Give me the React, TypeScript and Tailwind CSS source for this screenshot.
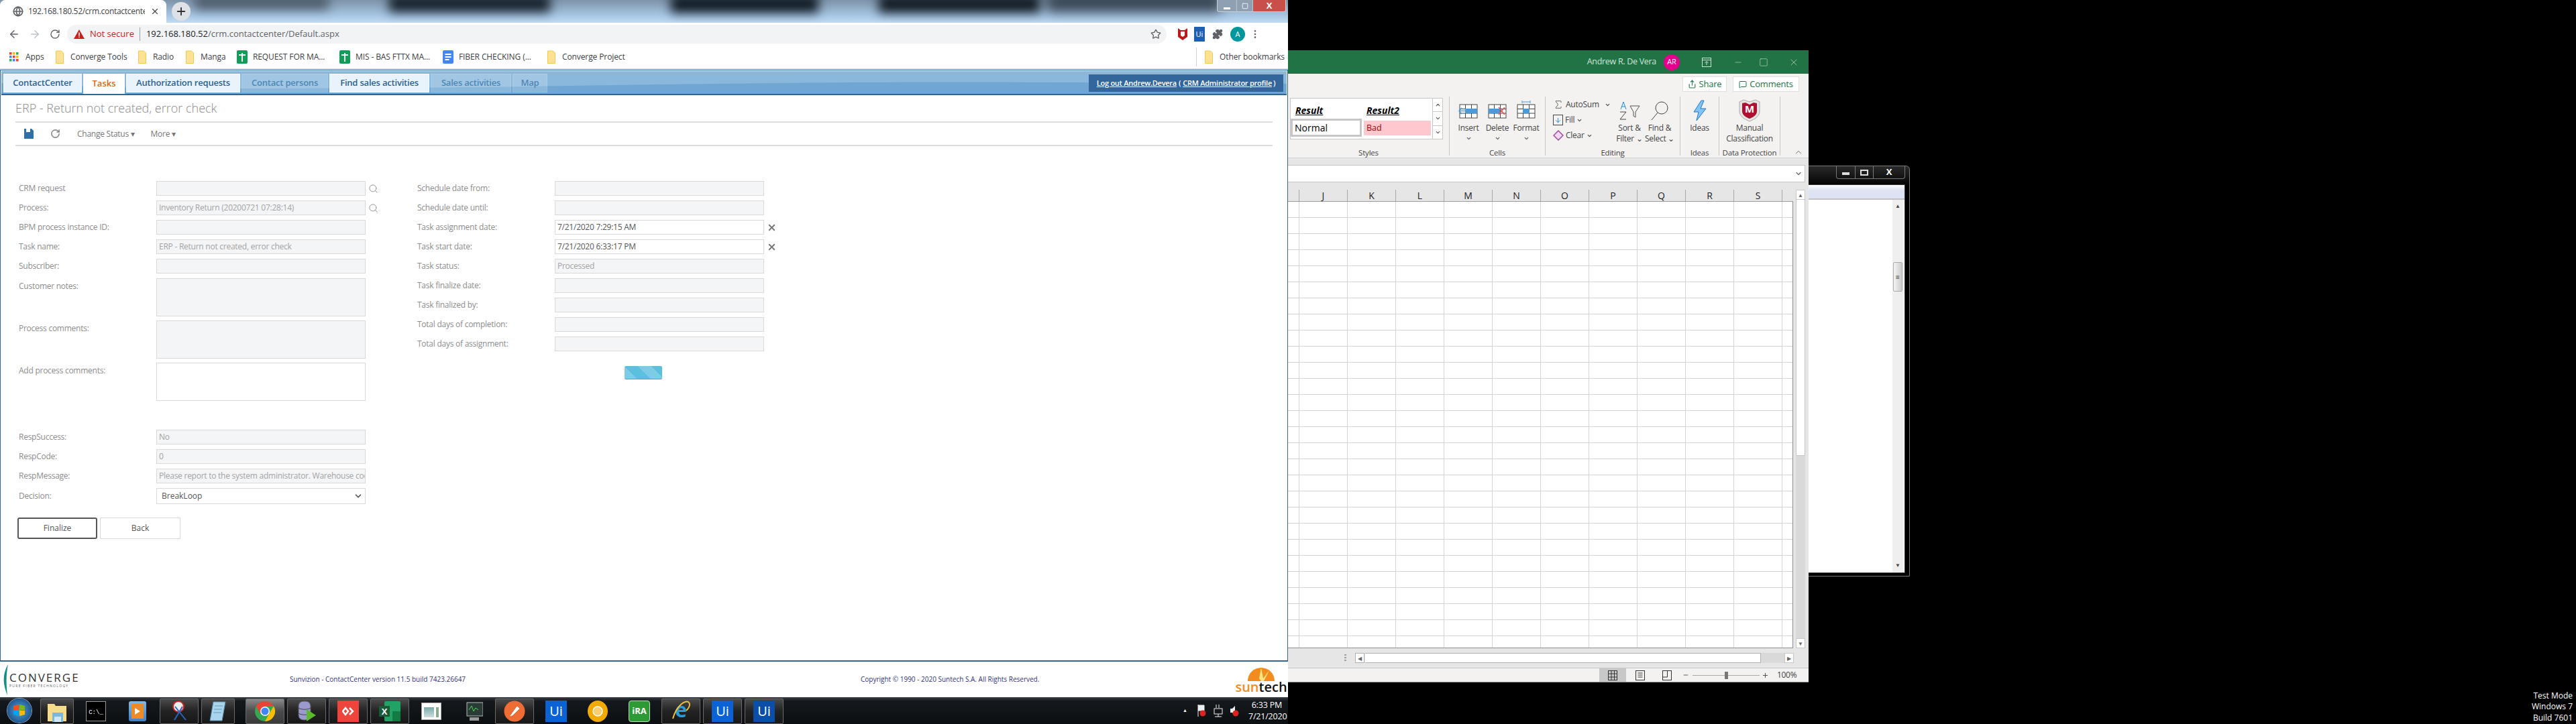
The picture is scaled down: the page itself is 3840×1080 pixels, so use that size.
import React from "react";
import { ArrowLeft, ArrowRight, RotateCw, Star, Search, X, ChevronDown, ChevronUp, Globe, Plus, MoreVertical, Puzzle, Share, MessageSquare, Minus, Square, Sigma, ArrowDown } from "lucide-react";

const Folder = () => (
  <svg width="12" height="20" viewBox="0 0 12 20" className="shrink-0"><path d="M0.5 1h8l3 3v15.500h-11z" fill="#fde293" stroke="#f2c94c" /></svg>
);
const GreenDoc = () => (
  <svg width="16" height="20" viewBox="0 0 16 20" className="shrink-0"><rect width="16" height="20" rx="2" fill="#0f9d58" /><path d="M3 7h10M8 4v13" stroke="#fff" strokeWidth="1.800" /></svg>
);
const BlueDoc = () => (
  <svg width="16" height="20" viewBox="0 0 16 20" className="shrink-0"><rect width="16" height="20" rx="2" fill="#4285f4" /><path d="M3.500 6h9M3.500 10h9M3.500 14h6" stroke="#fff" strokeWidth="2" /></svg>
);
const AppsGrid = () => (
  <svg width="14" height="14" viewBox="0 0 14 14" className="shrink-0">
    {[["#ea4335","#fbbc05","#34a853"],["#4285f4","#ea4335","#fbbc05"],["#34a853","#4285f4","#ea4335"]].map((r, y) => r.map((c, x) => <rect key={x + "-" + y} x={x * 5} y={y * 5} width="3.500" height="3.500" fill={c} />))}
  </svg>
);

function ChromeBars() {
  return (
    <>
      <div className="relative h-[34px] overflow-hidden bg-[linear-gradient(to_bottom,#7d93a8_0%,#a9c8e6_70%,#c3dbf2_100%)]">
        <div className="absolute left-[290px] top-[-8px] h-[22px] w-[200px] bg-[#4d5c6b] blur-[8px]" />
        <div className="absolute left-[580px] top-[-8px] h-[26px] w-[240px] bg-[#15202b] blur-[8px]" />
        <div className="absolute left-[1000px] top-[-8px] h-[27px] w-[220px] bg-[#101a24] blur-[8px]" />
        <div className="absolute left-[1310px] top-[-8px] h-[27px] w-[240px] bg-[#111a23] blur-[8px]" />
        <div className="absolute left-[1560px] top-[-8px] h-[24px] w-[260px] bg-[#2b3744] blur-[10px]" />
        <div className="relative flex items-center">
          <div className="flex h-[34px] w-[248px] items-center rounded-t-lg bg-white pl-[19px] pr-[10px] text-[12px] tracking-[-0.3px] text-[#3c4043]">
            <Globe size={16} className="mr-[7px] shrink-0 text-[#5f6368]" strokeWidth={2.500} />
            <span className="w-[174px] overflow-hidden whitespace-nowrap">192.168.180.52/crm.contactcenter</span>
            <X size={14} className="ml-auto shrink-0 text-[#444]" />
          </div>
          <div className="ml-[8px] flex h-[28px] w-[28px] items-center justify-center rounded-full bg-[#dee1e6] text-[#333]"><Plus size={18} strokeWidth={2.500} /></div>
        </div>
        <div className="absolute right-[3px] top-0 flex h-[18px] w-[103px] overflow-hidden rounded-b border border-t-0 border-[#e5e5e5]/70 bg-[#8fa0b2]">
          <div className="flex w-[28px] items-end justify-center pb-[3px]"><div className="h-[3px] w-[10px] bg-white" /></div>
          <div className="flex w-[25px] items-center justify-center border-x border-white/40"><Square size={10} className="text-white" strokeWidth={2} /></div>
          <div className="flex flex-1 items-center justify-center bg-[#c9504a] text-[13px] font-bold text-white">X</div>
        </div>
      </div>
      <div className="flex h-[34px] items-center bg-white">
        <ArrowLeft size={18} className="ml-[12px] text-[#5f6368]" />
        <ArrowRight size={18} className="ml-[13px] text-[#bdc1c6]" />
        <RotateCw size={16} className="ml-[13px] text-[#5f6368]" />
        <div className="ml-[10px] flex h-[28px] w-[1639px] items-center rounded-full bg-[#f1f3f4] pl-[10px] pr-[8px] text-[13px]">
          <svg width="16" height="14" viewBox="0 0 16 14" className="shrink-0"><path d="M8 0l8 14H0z" fill="#c5221f" /><rect x="7.200" y="4.500" width="1.600" height="5" fill="#fff" /><rect x="7.200" y="10.500" width="1.600" height="1.600" fill="#fff" /></svg>
          <span className="ml-[8px] text-[#c5221f]">Not secure</span>
          <span className="ml-[8px] mr-[9px] h-[20px] w-px bg-[#9aa0a6]" />
          <span className="text-[#202124]">192.168.180.52</span><span className="text-[#5f6368]">/crm.contactcenter/Default.aspx</span>
          <Star size={16} className="ml-auto text-[#5f6368]" />
        </div>
        <svg width="14" height="20" viewBox="0 0 14 20" className="ml-[17px] shrink-0"><path d="M0 1l4 3h6l4-3v13l-7 5-7-5z" fill="#c01818" /><path d="M4 6h6v6l-3 2-3-2z" fill="#fff" /></svg>
        <div className="ml-[10px] flex h-[22px] w-[16px] items-center justify-center bg-[#1f5fb0] text-[11px] text-white">Ui</div>
        <Puzzle size={16} className="ml-[11px] fill-[#5f6368] text-[#5f6368]" />
        <div className="ml-[11px] flex h-[22px] w-[22px] items-center justify-center rounded-full bg-[#00979d] text-[11px] text-white">A</div>
        <MoreVertical size={16} className="ml-[7px] text-[#5f6368]" />
      </div>
      <div className="flex h-[34px] items-center bg-white text-[12px] tracking-[-0.1px] text-[#3c4043]">
        <div className="ml-[14px] flex w-[69px] items-center gap-[10px]"><AppsGrid /><span>Apps</span></div>
        <div className="flex w-[123px] items-center gap-[10px]"><Folder /><span>Converge Tools</span></div>
        <div className="flex w-[71px] items-center gap-[10px]"><Folder /><span>Radio</span></div>
        <div className="flex w-[76px] items-center gap-[10px]"><Folder /><span>Manga</span></div>
        <div className="flex w-[153px] items-center gap-[8px]"><GreenDoc /><span>REQUEST FOR MA...</span></div>
        <div className="flex w-[154px] items-center gap-[8px]"><GreenDoc /><span>MIS - BAS FTTX MA...</span></div>
        <div className="flex w-[156px] items-center gap-[8px]"><BlueDoc /><span>FIBER CHECKING (...</span></div>
        <div className="flex items-center gap-[10px]"><Folder /><span>Converge Project</span></div>
        <div className="ml-auto mr-[5px] flex items-center gap-[10px]"><span className="mr-[2px] h-[28px] w-px bg-[#d0d0d0]" /><Folder /><span>Other bookmarks</span></div>
      </div>
    </>
  );
}

const tabClass = "flex h-[28px] items-center justify-center border border-white/70 bg-[#e9f3fb] text-[13px] font-semibold tracking-[-0.2px] text-[#2c6291]";
const tabOff = "flex h-[28px] items-center justify-center border border-white/10 bg-white/20 text-[13px] font-semibold tracking-[-0.2px] text-[#4d86b5]";

function AppHeader() {
  return (
    <div className="relative flex h-[36px] items-end justify-between overflow-hidden border-b-2 border-[#2f6599] bg-[#8ab8dc]">
      <svg className="absolute inset-0 h-full w-full" viewBox="0 0 1914 36" preserveAspectRatio="none"><path d="M0 19C150 28 400 30 800 24S1300 15 1914 20V36H0z" fill="#6fa6d2" /></svg>
      <div className="relative ml-[3px] flex gap-[2px]">
        <div className={"w-[117px] " + tabClass}>ContactCenter</div>
        <div className="flex h-[30px] w-[62px] items-center justify-center bg-white text-[13px] font-semibold text-[#d9660f]">Tasks</div>
        <div className={"w-[170px] " + tabClass}>Authorization requests</div>
        <div className={"w-[129px] " + tabOff}>Contact persons</div>
        <div className={"w-[149px] " + tabClass}>Find sales activities</div>
        <div className={"w-[120px] " + tabOff}>Sales activities</div>
        <div className={"w-[52px] " + tabOff}>Map</div>
      </div>
      <div className="relative mb-[3px] mr-[5px] flex h-[26px] w-[290px] items-center justify-center bg-[#33669a] text-[11px] font-semibold tracking-[-0.25px] whitespace-nowrap text-white">
        <span className="underline">Log out Andrew.Devera</span><span className="mx-[3px]">(</span><span className="underline">CRM Administrator profile</span><span className="ml-[2px]">)</span>
      </div>
    </div>
  );
}

const inputBase = "flex h-[22px] w-[312px] items-center overflow-hidden border border-[#d9d9d9] px-[3px] text-[12px] tracking-[-0.25px] whitespace-nowrap";
const labelClass = "w-[205px] text-[12px] tracking-[-0.25px] text-[#8c8c8c]";

function Field({ label, value, white, after }: { label: string; value?: string; white?: boolean; after?: React.ReactNode }) {
  return (
    <div className="mb-[7px] flex h-[22px] items-center">
      <div className={labelClass}>{label}</div>
      <div className={inputBase + (white ? " bg-white text-[#555]" : " bg-[#f4f5f7] text-[#a3a3a3]")}>{value}</div>
      {after}
    </div>
  );
}
function Area({ label, white }: { label: string; white?: boolean }) {
  return (
    <div className="mb-[6px] flex h-[57px] items-start">
      <div className={labelClass + " pt-[3px]"}>{label}</div>
      <div className={"h-[57px] w-[312px] border border-[#d9d9d9] " + (white ? "bg-white" : "bg-[#f4f5f7]")} />
    </div>
  );
}
const SearchIcon = () => <Search size={15} className="ml-[4px] text-[#8d8d8d]" strokeWidth={1.500} />;
const ClearIcon = () => <X size={15} className="ml-[4px] text-[#777]" strokeWidth={3} />;

function Form() {
  return (
    <div className="flex pl-[27px] pt-[52px]">
      <div className="w-[594px]">
        <Field label="CRM request" after={<SearchIcon />} />
        <Field label="Process:" value="Inventory Return (20200721 07:28:14)" after={<SearchIcon />} />
        <Field label="BPM process instance ID:" />
        <Field label="Task name:" value="ERP - Return not created, error check" />
        <Field label="Subscriber:" />
        <Area label="Customer notes:" />
        <Area label="Process comments:" />
        <Area label="Add process comments:" white />
        <div className="h-[37px]" />
        <Field label="RespSuccess:" value="No" />
        <Field label="RespCode:" value="0" />
        <Field label="RespMessage:" value="Please report to the system administrator. Warehouse code" />
        <div className="flex h-[24px] items-center">
          <div className={labelClass}>Decision:</div>
          <div className="flex h-[24px] w-[312px] items-center justify-between border border-[#d9d9d9] bg-white pl-[7px] pr-[3px] text-[12px] text-[#555]">BreakLoop<ChevronDown size={14} strokeWidth={3} className="text-[#555]" /></div>
        </div>
        <div className="ml-[-2px] mt-[20px] flex gap-[4px] text-[12px] text-[#555]">
          <div className="flex h-[32px] w-[119px] items-center justify-center rounded-[3px] border-2 border-[#555]">Finalize</div>
          <div className="flex h-[32px] w-[120px] items-center justify-center border border-[#d9d9d9]">Back</div>
        </div>
      </div>
      <div>
        <Field label="Schedule date from:" />
        <Field label="Schedule date until:" />
        <Field label="Task assignment date:" value="7/21/2020 7:29:15 AM" white after={<ClearIcon />} />
        <Field label="Task start date:" value="7/21/2020 6:33:17 PM" white after={<ClearIcon />} />
        <Field label="Task status:" value="Processed" />
        <Field label="Task finalize date:" />
        <Field label="Task finalized by:" />
        <Field label="Total days of completion:" />
        <Field label="Total days of assignment:" />
        <div className="ml-[309px] mt-[22px] h-[20px] w-[56px] rounded-[2px] border-b border-[#46a8c8] bg-[linear-gradient(45deg,#5bc0de_25%,#7bcce4_25%,#7bcce4_50%,#5bc0de_50%,#5bc0de_75%,#7bcce4_75%)] bg-[size:40px_40px]" />
      </div>
    </div>
  );
}

function Footer() {
  return (
    <div className="relative flex h-[53px] items-center bg-white text-[10px] text-[#33337a]">
      <div className="flex w-[432px] items-center">
        <svg width="14" height="48" viewBox="0 0 14 48" className="ml-[2px] shrink-0"><path d="M10 1C4 12 0 26 9 47 7 30 7 16 10 1z" fill="#168e84" /></svg>
        <div className="ml-[-2px] leading-none">
          <div className="text-[17px] tracking-[2px] text-[#333]">CONVERGE</div>
          <div className="mt-[2px] text-[5px] tracking-[1.300px] text-[#555]">PURE FIBER TECHNOLOGY</div>
        </div>
      </div>
      <div className="w-[851px]">Sunvizion - ContactCenter version 11.5 build 7423.26647</div>
      <div>Copyright © 1990 - 2020 Suntech S.A. All Rights Reserved.</div>
      <div className="absolute right-[4px] top-[7px] flex w-[72px] flex-col items-center">
        <svg width="44" height="22" viewBox="0 0 44 22"><path d="M2 22a20 20 0 0 1 40 0z" fill="#f28c1e" /><path d="M22 22L10 6l9 12L22 2l3 16 9-12-8 16z" fill="#ffe680" /></svg>
        <div className="text-[20px] leading-[17px] font-semibold"><span className="text-[#f28c1e]">sun</span><span className="text-[#111]">tech</span></div>
      </div>
    </div>
  );
}

function ChromeWindow() {
  return (
    <div className="absolute left-0 top-0 flex h-[1040px] w-[1920px] flex-col bg-white">
      <ChromeBars />
      <div className="h-[2px] bg-[#d4d8dc]" />
      <div className="flex h-[883px] flex-col border-2 border-t-[1px] border-[#2f6599] border-r-[1px] border-l-[1px]">
        <div className="mx-[1px] mt-[1px]"><AppHeader /></div>
        <div className="mx-[22px] mt-0 flex h-[41px] items-end"><div className="flex h-[41px] w-full items-center border-b-2 border-[#dcdcdc] text-[18px] font-light text-[#8a8a8a]">ERP - Return not created, error check</div></div>
        <div className="mx-[22px] flex h-[35px] items-center border-b-2 border-[#dcdcdc] text-[12px] tracking-[-0.25px] text-[#777]">
          <svg width="14" height="15" viewBox="0 0 14 15" className="ml-[13px]"><path d="M0 0h3v5h6V0h2l3 3v12H0z" fill="#2f6fa8" /></svg>
          <RotateCw size={15} className="ml-[25px] text-[#888]" strokeWidth={2.500} />
          <span className="ml-[25px]">Change Status ▾</span>
          <span className="ml-[24px]">More ▾</span>
        </div>
        <Form />
      </div>
      <Footer />
    </div>
  );
}

const Ribbon = ({ children, w, label }: { children?: React.ReactNode; w: string; label: string }) => (
  <div className={"relative flex h-[88px] flex-col border-r border-[#c8c6c4] " + w}>
    <div className="flex min-h-0 flex-1">{children}</div>
    <div className="mb-[-4px] text-center text-[11.500px] leading-[16px] tracking-[-0.2px] text-[#444]">{label}</div>
  </div>
);
const TableIcon = ({ kind }: { kind: string }) => (
  <svg width="30" height="24" viewBox="0 0 30 24" className="shrink-0 overflow-visible">
    <rect x="2" y="3" width="26" height="20" fill="#fff" stroke="#444" />
    <path d="M10.500 3v20M19.500 3v20M2 9.500h26M2 16h26" stroke="#444" />
    {kind === "i" && <><rect x="10" y="9" width="18" height="7" fill="#4a9bdc" /><path d="M13 12.500H1M5 8l-4 4.500L5 17" stroke="#4a9bdc" fill="none" strokeWidth="1.500" /></>}
    {kind === "d" && <><rect x="2" y="9" width="17" height="7" fill="#4a9bdc" /><path d="M17 7l9 11M26 7l-9 11" stroke="#e8584f" strokeWidth="1.500" /></>}
    {kind === "f" && <><rect x="10" y="9" width="10" height="7" fill="#4a9bdc" /><path d="M9 -1h12M9-3v4M21-3v4" stroke="#4a9bdc" /></>}
  </svg>
);
const RibbonBtn = ({ center, children, icon, chevron = true }: { center?: string; children: React.ReactNode; icon: React.ReactNode; chevron?: boolean }) => (
  <div className={"flex flex-col items-center pt-[6px] text-[12px] leading-[16px] tracking-[-0.25px] text-[#444] " + (center ?? "")}>
    <div className="flex h-[30px] items-center">{icon}</div>
    <div className="mt-[3px] text-center whitespace-nowrap">{children}</div>
    {chevron && <ChevronDown size={9} strokeWidth={3} className="mt-[3px] text-[#555]" />}
  </div>
);

function Excel() {
  const cols = ["J","K","L","M","N","O","P","Q","R","S"];
  return (
    <div className="absolute left-[1920px] top-[75px] flex h-[943px] w-[776px] flex-col border-b border-[#8e8e8e] bg-[#e6e6e6]">
      <div className="flex h-[35px] items-center justify-end bg-[#217346] text-[#cfe3d7]">
        <span className="text-[12.500px] tracking-[-0.3px]">Andrew R. De Vera</span>
        <span className="ml-[11px] flex h-[24px] w-[24px] items-center justify-center rounded-full bg-[#e3008c] text-[11px] text-white">AR</span>
        <svg width="14" height="14" viewBox="0 0 14 14" className="ml-[33px]" fill="none" stroke="currentColor"><rect x=".5" y=".5" width="13" height="13" /><path d="M.5 3.500h13M7 11V6M4.500 8L7 5.500 9.500 8" /></svg>
        <Minus size={14} className="ml-[33px]" strokeWidth={1} />
        <Square size={14} className="ml-[24px]" strokeWidth={1} />
        <X size={16} className="ml-[30px] mr-[14px]" strokeWidth={1} />
      </div>
      <div className="relative h-[126px] border-b border-[#d0d0d0] bg-[#f3f2f1]">
        <div className="absolute right-[14px] top-[4px] flex gap-[9px] text-[13px] tracking-[-0.2px] text-[#217346]">
          <div className="flex h-[23px] w-[66px] items-center justify-center gap-[4px] border border-[#e1dfdd] bg-white"><Share size={13} /> Share</div>
          <div className="flex h-[23px] w-[99px] items-center justify-center gap-[4px] border border-[#e1dfdd] bg-white"><MessageSquare size={12} /> Comments</div>
        </div>
        <div className="flex pt-[34px]">
          <Ribbon w="w-[241px]" label="Styles">
            <div className="ml-[3px] mt-[2px] flex h-[62px] w-[228px] border border-[#c8c6c4] bg-white">
              <div className="flex-1">
                <div className="flex h-[30px] items-end pb-[2px] pl-[7px] text-[14px] font-bold italic text-black underline"><span className="w-[106px]">Result</span><span>Result2</span></div>
                <div className="flex">
                  <div className="flex h-[27px] w-[106px] items-center border-[3px] border-[#c6c6c6] pl-[3px] text-[14px] text-black">Normal</div>
                  <div className="ml-[3px] mt-[3px] flex h-[22px] w-[100px] items-center bg-[#ffc7ce] pl-[4px] text-[12.500px] text-[#9c0006]">Bad</div>
                </div>
              </div>
              <div className="flex w-[15px] flex-col border-l border-[#c8c6c4] text-[#555]">
                <div className="flex flex-1 items-center justify-center border-b border-[#c8c6c4]"><ChevronUp size={9} strokeWidth={3} /></div>
                <div className="flex flex-1 items-center justify-center border-b border-[#c8c6c4]"><ChevronDown size={9} strokeWidth={3} /></div>
                <div className="flex flex-1 items-center justify-center"><ChevronDown size={9} strokeWidth={3} /></div>
              </div>
            </div>
          </Ribbon>
          <Ribbon w="w-[143px]" label="Cells">
            <div className="flex w-full justify-center">
              <RibbonBtn center="w-[43px]" icon={<TableIcon kind="i" />}>Insert</RibbonBtn>
              <RibbonBtn center="w-[43px]" icon={<TableIcon kind="d" />}>Delete</RibbonBtn>
              <RibbonBtn center="w-[43px]" icon={<TableIcon kind="f" />}>Format</RibbonBtn>
            </div>
          </Ribbon>
          <Ribbon w="w-[201px]" label="Editing">
            <div className="flex w-full text-[12px] leading-[16px] tracking-[-0.25px] text-[#444]">
              <div className="ml-[11px] flex w-[91px] flex-col gap-[7px] pt-[4px]">
                <div className="flex h-[16px] items-center gap-[3px]"><Sigma size={16} strokeWidth={1.200} />AutoSum<ChevronDown size={9} strokeWidth={3} className="ml-[5px]" /></div>
                <div className="flex h-[16px] items-center gap-[3px]"><span className="flex h-[16px] w-[15px] items-center justify-center border border-[#444]"><ArrowDown size={11} className="text-[#1e88d8]" /></span>Fill<ChevronDown size={9} strokeWidth={3} /></div>
                <div className="flex h-[16px] items-center gap-[3px]"><svg width="16" height="16" viewBox="0 0 16 16"><path d="M8 1l7 7-7 7-7-7z" fill="#f2d8f5" stroke="#a349a4" strokeWidth="1.500" /></svg>Clear<ChevronDown size={9} strokeWidth={3} /></div>
              </div>
              <RibbonBtn chevron={false} center="w-[46px]" icon={<svg width="34" height="28" viewBox="0 0 34 28" fill="none"><path d="M18 7h14l-6 9v8l-3-2v-6z" stroke="#555" /><path d="M4 12L8 1l4 11M5 8h6" stroke="#1e88d8" /><path d="M3 16h9l-9 11h9" stroke="#444" /></svg>}><>Sort &<br />Filter ⌄</></RibbonBtn>
              <RibbonBtn chevron={false} center="w-[44px]" icon={<svg width="30" height="30" viewBox="0 0 30 30" fill="none" stroke="#444"><circle cx="18" cy="11" r="9" /><path d="M12 18L3 29" /></svg>}><>Find &<br />Select ⌄</></RibbonBtn>
            </div>
          </Ribbon>
          <Ribbon w="w-[58px]" label="Ideas">
            <div className="w-full"><RibbonBtn chevron={false} icon={<svg width="22" height="32" viewBox="0 0 22 32"><path d="M13 1L2 18h7L6 31l14-18h-8l5-12z" fill="#7fc4f4" stroke="#1e78c8" /></svg>}>Ideas</RibbonBtn></div>
          </Ribbon>
          <Ribbon w="w-[91px]" label="Data Protection">
            <div className="w-full"><RibbonBtn chevron={false} icon={<svg width="32" height="34" viewBox="0 0 32 34"><path d="M1 4l6-3 9 3 9-3 6 3v14c0 8-8 12-15 15C9 30 1 26 1 18z" fill="#e5e5e5" stroke="#aaa" /><path d="M5 6l5-1 6 3 6-3 5 1v12c0 6-6 9-11 11C11 27 5 24 5 18z" fill="#b01030" /><text x="16" y="20" textAnchor="middle" fontSize="15" fontWeight="700" fill="#fff">M</text></svg>}><>Manual<br />Classification</></RibbonBtn></div>
          </Ribbon>
          <ChevronUp size={14} className="ml-[20px] mt-[76px] text-[#555]" strokeWidth={1.500} />
        </div>
      </div>
      <div className="flex h-[47px] items-start pt-[10px]">
        <div className="flex h-[26px] w-[771px] items-center justify-end border-y border-r border-[#c6c6c6] bg-white pr-[3px]"><ChevronDown size={12} strokeWidth={3} className="text-[#777]" /></div>
      </div>
      <div className="flex min-h-0 flex-1">
        <div className="flex w-[753px] flex-col">
          <div className="flex h-[18px] border-b border-[#9b9b9b] text-[14px] leading-[18px] text-[#222]">
            <div className="w-[17px] shrink-0 border-r border-[#a8a8a8]" />
            {cols.map(c => <div key={c} className="w-[72px] shrink-0 border-r border-[#a8a8a8] text-center">{c}</div>)}
            <div className="flex-1" />
          </div>
          <div className="flex-1 border-r border-b border-[#8e8e8e] bg-white bg-[linear-gradient(to_right,#d4d4d4_1px,transparent_1px),linear-gradient(to_bottom,#d4d4d4_1px,transparent_1px)] bg-[size:72px_24px] bg-[position:16px_-1px]" />
        </div>
        <div className="ml-[4px] flex w-[14px] flex-col pb-0 text-[#666]">
          <div className="flex h-[15px] items-center justify-center border border-[#c6c6c6] bg-white text-[8px]">▲</div>
          <div className="h-[382px] border-x border-b border-[#c6c6c6] bg-white" />
          <div className="flex-1 bg-[#d9d9d9]" />
          <div className="flex h-[15px] items-center justify-center border border-[#c6c6c6] bg-white text-[8px]">▼</div>
        </div>
      </div>
      <div className="flex h-[29px] items-start pl-[84px] pt-[7px] text-[#666]">
        <div className="mr-[13px] mt-[2px] flex w-[3px] flex-col gap-[2px]"><span className="h-[2px] w-[3px] bg-[#a0a0a0]" /><span className="h-[2px] w-[3px] bg-[#a0a0a0]" /><span className="h-[2px] w-[3px] bg-[#a0a0a0]" /></div>
        <div className="flex h-[15px] w-[14px] items-center justify-center border border-[#b0b0b0] bg-white text-[8px]">◀</div>
        <div className="ml-[1px] h-[15px] w-[590px] border-y border-r border-[#b0b0b0] bg-white" />
        <div className="h-[15px] w-[35px] bg-[#d9d9d9]" />
        <div className="flex h-[15px] w-[14px] items-center justify-center border border-[#c6c6c6] bg-white text-[8px]">▶</div>
      </div>
      <div className="flex h-[21px] items-stretch justify-start border-t border-[#c6c6c6] bg-[#f3f2f1] text-[#444]">
        <div className="ml-[464px] flex w-[40px] items-center justify-center bg-[#c8c8c8]"><svg width="14" height="15" viewBox="0 0 14 15" fill="none" stroke="#333"><rect x=".5" y=".5" width="13" height="14" /><path d="M5 .5v14M9.500.5v14M.5 5h13M.5 10h13" /></svg></div>
        <div className="flex w-[41px] items-center justify-center"><svg width="14" height="15" viewBox="0 0 14 15" fill="none" stroke="#333"><rect x=".5" y=".5" width="13" height="14" /><path d="M3.500 4h7M3.500 7h7M3.500 10h7" /></svg></div>
        <div className="flex w-[40px] items-center justify-center"><svg width="14" height="15" viewBox="0 0 14 15" fill="none" stroke="#333"><rect x=".5" y=".5" width="13" height="14" /><path d="M.5 10h7V.5" /></svg></div>
        <Minus size={10} className="ml-[3px] self-center" strokeWidth={2} />
        <div className="relative ml-[5px] h-px w-[100px] self-center bg-[#a8a8a8]"><div className="absolute left-[48px] top-[-5px] h-[11px] w-[5px] bg-[#777]" /></div>
        <Plus size={11} className="ml-[3px] self-center" strokeWidth={2} />
        <span className="ml-[12px] self-center text-[12px] tracking-[-0.3px]">100%</span>
      </div>
    </div>
  );
}

function DarkWindow() {
  return (
    <div className="absolute left-[2640px] top-[247px] flex h-[613px] w-[207px] flex-col rounded-tr-[6px] border border-[#777] bg-[linear-gradient(to_bottom,#2a2a2a,#000_30px)] pb-[4px] pr-[6px]">
      <div className="flex h-[27px] justify-end">
        <div className="flex h-[19px] w-[103px] rounded-b-[4px] border border-t-0 border-[#777] text-white">
          <div className="flex w-[28px] items-center justify-center border-r border-[#777]"><div className="mt-[3px] h-[4px] w-[11px] bg-[#ddd]" /></div>
          <div className="flex w-[27px] items-center justify-center border-r border-[#777]"><div className="h-[9px] w-[12px] border-2 border-[#ddd]" /></div>
          <div className="flex flex-1 items-center justify-center text-[13px] font-bold">X</div>
        </div>
      </div>
      <div className="flex flex-1 flex-col border border-[#333] bg-white">
        <div className="h-[20px] bg-[linear-gradient(to_bottom,#fff,#dde3f2_40%)]" />
        <div className="flex flex-1 justify-end border-t-2 border-[#c0c0c8]">
          <div className="flex w-[16px] flex-col items-center bg-[#efefef] text-[#444]">
            <span className="pt-[4px] text-[8px] leading-[10px]">▲</span>
            <div className="mt-[79px] flex h-[44px] w-[14px] items-center justify-center rounded-[2px] border border-[#aaa] bg-[linear-gradient(to_right,#f4f4f4,#ccc)] text-[10px]">≡</div>
            <div className="flex-1" />
            <span className="pb-[6px] text-[8px] leading-[10px]">▼</span>
          </div>
          <div className="w-[2px]" />
        </div>
      </div>
    </div>
  );
}

const tbFrame = "flex h-[38px] items-center justify-center rounded-[2px] border border-[#6a6a6a] ";
const tbDark = tbFrame + "bg-[linear-gradient(to_bottom,#4a4a4a,#222_50%,#181818)] ";
const tbBtn = tbDark + "w-[58px]";
const tbNarrow = tbDark + "w-[50px]";
const tbActive = tbFrame + "w-[58px] bg-[linear-gradient(to_bottom,#8a8a8a,#4a4a4a_50%,#3a3a3a)]";
const tbPlain = "flex h-[38px] w-[58px] items-center justify-center";
const UiTile = ({ dark }: { dark?: boolean }) => <div className={"flex h-[32px] w-[32px] items-center justify-center text-[20px] text-white " + (dark ? "bg-[#0a4ea8]" : "bg-[#0a62d6]")}>Ui</div>;

function Taskbar() {
  return (
    <div className="absolute left-0 top-[1040px] flex h-[40px] w-[1920px] items-end gap-[4px] bg-[linear-gradient(to_bottom,#3a3f44,#14181c_15%,#0c0f12)] pl-[4px]">
      <div className="flex h-[40px] w-[50px] items-center justify-center">
        <div className="flex h-[36px] w-[36px] items-center justify-center rounded-full bg-[radial-gradient(circle,#4ea3dc,#103a70)] ring-1 ring-[#88aacc]">
          <svg width="20" height="20" viewBox="0 0 20 20"><path d="M1 3l8-2v8H1z" fill="#f25022" /><path d="M10 1l8 2v6h-8z" fill="#7fba00" /><path d="M1 10h8v8l-8-2z" fill="#00a4ef" /><path d="M10 10h8v6l-8 2z" fill="#ffb900" /></svg>
        </div>
      </div>
      <div className={tbNarrow + " ml-[2px]"}>
        <svg width="30" height="32" viewBox="0 0 30 32"><path d="M1 5h10l2 3h16v23H1z" fill="#f7dc8a" /><rect x="8" y="18" width="16" height="14" fill="#7ab8e0" /><rect x="11" y="24" width="10" height="8" fill="#d0e8f5" /></svg>
      </div>
      <div className={tbPlain}><div className="flex h-[30px] w-[30px] items-center justify-center border border-[#999] bg-black pt-[6px] font-['Liberation_Mono',monospace] text-[9px] text-white">C:\_</div></div>
      <div className={tbPlain}><div className="flex h-[30px] w-[26px] items-center justify-center rounded-[3px] bg-[linear-gradient(to_bottom,#7db8e8,#4480c0)]"><div className="flex h-[22px] w-[18px] items-center justify-center bg-[#f08a24]"><svg width="8" height="10" viewBox="0 0 8 10"><path d="M0 0l8 5-8 5z" fill="#fff" /></svg></div></div></div>
      <div className={tbBtn}><svg width="30" height="34" viewBox="0 0 30 34" fill="none"><circle cx="14" cy="10" r="8" fill="#eee" stroke="#c22" strokeWidth="2" /><path d="M9 10l16 20M20 10L8 30" stroke="#2468c8" strokeWidth="2" /></svg></div>
      <div className={tbNarrow}><svg width="26" height="32" viewBox="0 0 26 32"><path d="M6 2h18l-5 28H1z" fill="#a8d4ec" stroke="#5a90b0" /><path d="M8 8h12M7 13h12M6 18h12" stroke="#6a9ab8" /></svg></div>
      <div className="w-[8px]" />
      <div className={tbActive}><svg width="32" height="32" viewBox="0 0 32 32"><circle cx="16" cy="16" r="15" fill="#34a853" /><path d="M16 1a15 15 0 0 1 13 7.500H16z" fill="#ea4335" /><path d="M3 8.500A15 15 0 0 1 16 1v7.500h0L9 20z" fill="#ea4335" /><path d="M29 8.500A15 15 0 0 1 16 31l6-11z" fill="#fbbc05" /><circle cx="16" cy="16" r="7" fill="#fff" /><circle cx="16" cy="16" r="5.500" fill="#4285f4" /></svg></div>
      <div className={tbBtn}><svg width="30" height="34" viewBox="0 0 30 34"><rect x="3" y="2" width="18" height="28" rx="7" fill="#9a9ad0" stroke="#555" /><path d="M3 12c4 3 14 3 18 0M3 20c4 3 14 3 18 0" stroke="#444" fill="none" /><path d="M15 14l14 9-14 9z" fill="#5cb82c" /></svg></div>
      <div className={tbBtn}><div className="flex h-[32px] w-[32px] items-center justify-center bg-[#ef443b]"><svg width="18" height="14" viewBox="0 0 18 14" fill="none" stroke="#fff" strokeWidth="2.500"><path d="M5 2L1 7l4 5 4-5zM11 2l5 5-5 5" /></svg></div></div>
      <div className={tbBtn}><svg width="32" height="30" viewBox="0 0 32 30"><rect x="8" width="24" height="30" rx="2" fill="#21a366" /><rect x="20" y="15" width="12" height="15" fill="#107c41" /><rect y="7" width="16" height="16" fill="#185c37" /><text x="8" y="20" textAnchor="middle" fontSize="13" fontWeight="700" fill="#fff">X</text></svg></div>
      <div className={tbPlain}><div className="flex h-[26px] w-[30px] border border-[#aaa] bg-white p-[3px] pt-[6px]"><div className="h-full w-[16px] bg-[linear-gradient(to_bottom,#7aa,#cdd)]" /><div className="ml-[3px] h-full w-[4px] bg-[#8a8]" /></div></div>
      <div className={tbPlain}><svg width="30" height="32" viewBox="0 0 30 32"><rect x="6" y="3" width="24" height="20" fill="#2a3a34" stroke="#bbb" /><path d="M9 14l4-6 3 8 3-5 4 3" stroke="#4dd84d" fill="none" /><rect x="10" y="25" width="14" height="5" fill="#999" /></svg></div>
      <div className={tbBtn}><svg width="32" height="32" viewBox="0 0 32 32"><circle cx="16" cy="16" r="15.500" fill="#ef6c35" /><path d="M10 23l10-14M20 9l3 3-9 9-4 2z" stroke="#fff" fill="#fff" /></svg></div>
      <div className={tbPlain}><UiTile /></div>
      <div className={tbPlain}><svg width="30" height="32" viewBox="0 0 30 32"><ellipse cx="15" cy="16" rx="15" ry="16" fill="#f2a900" /><circle cx="15" cy="16" r="7" fill="#f8cf70" stroke="#fff" strokeWidth="1.500" /></svg></div>
      <div className={tbPlain}><div className="flex h-[32px] w-[32px] items-center justify-center rounded-[4px] border border-[#bbe0bb] bg-[#2e9a35] text-[13px] font-bold text-white">iRA</div></div>
      <div className={tbBtn}><svg width="32" height="32" viewBox="0 0 32 32"><text x="16" y="25" textAnchor="middle" fontSize="30" fontWeight="700" fill="#2a9ad8">e</text><path d="M4 27C10 6 24-2 28 3c3 4-2 10-4 12" stroke="#f5c33b" strokeWidth="2" fill="none" /></svg></div>
      <div className={tbBtn}><UiTile /></div>
      <div className={tbBtn}><UiTile dark /></div>
      <div className="ml-auto flex h-[40px] items-center pr-[5px] text-white">
        <span className="text-[7px]">▲</span>
        <svg width="14" height="20" viewBox="0 0 14 20" className="ml-[14px]"><path d="M2 1v18M2 2h9v8H2" stroke="#eee" fill="#eee" /><circle cx="9" cy="14" r="4.500" fill="#d22" /></svg>
        <svg width="14" height="20" viewBox="0 0 14 20" className="ml-[11px]"><rect x="1" y="7" width="12" height="8" fill="none" stroke="#eee" /><path d="M4 1v5M8 1v5M7 15v4M2 19h10" stroke="#eee" /></svg>
        <svg width="14" height="20" viewBox="0 0 14 20" className="ml-[10px]"><path d="M1 7h3l4-4v14l-4-4H1z" fill="#eee" /><circle cx="9" cy="14" r="4.500" fill="#d22" /></svg>
        <div className="ml-[14px] w-[54px] text-right text-[12.500px] leading-[17px] tracking-[-0.2px]"><div className="pr-[4px]">6:33 PM</div><div>7/21/2020</div></div>
      </div>
    </div>
  );
}

export default function App() {
  return (
    <div className="relative h-[1080px] w-[3840px] overflow-hidden bg-black font-['Open_Sans',sans-serif]">
      <DarkWindow />
      <Excel />
      <ChromeWindow />
      <Taskbar />
      <div className="absolute bottom-[1px] right-[5px] text-right text-[12px] leading-[16.500px] text-white">
        <div>Test Mode</div><div>Windows 7</div><div>Build 7601</div>
      </div>
    </div>
  );
}
